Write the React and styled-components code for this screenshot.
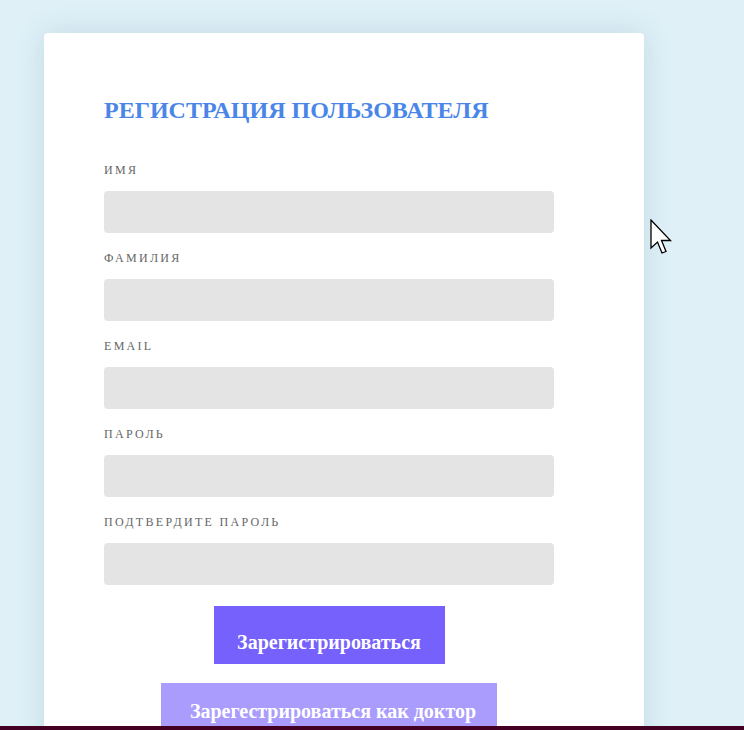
import styled, { createGlobalStyle } from "styled-components";

const GlobalStyle = createGlobalStyle`
  body {
    margin: 0;
    background: #dff0f7;
    font-family: "Liberation Serif", "Times New Roman", serif;
  }
`;

const Page = styled.div`
  min-height: 730px;
  padding: 33px 0 0 44px;
  box-sizing: border-box;
`;

const Card = styled.div`
  width: 600px;
  min-height: 720px;
  box-sizing: border-box;
  padding: 63px 60px 40px;
  background-color: #fff;
  border-radius: 4px;
  box-shadow: 0 0 28px rgba(60, 120, 150, 0.18);
`;

const Title = styled.h2`
  margin: 0 0 38px;
  font-size: 24px;
  line-height: 28px;
  font-weight: bold;
  color: #4a86e8;
`;

const Form = styled.form`
  width: 450px;
  display: flex;
  flex-direction: column;
`;

const Field = styled.div`
  display: flex;
  flex-direction: column;
  margin-bottom: 17px;
`;

const Label = styled.label`
  font-size: 12px;
  line-height: 16px;
  letter-spacing: 2.3px;
  color: #666;
  margin-bottom: 13px;
`;

const Input = styled.input`
  height: 42px;
  border: none;
  border-radius: 4px;
  background-color: #e4e4e4;
  outline: none;
  padding: 0 12px;
`;

const Button = styled.button`
  align-self: center;
  border: none;
  padding: ${(p) => (p.$light ? "13px 16px 14px 24px" : "21px 20px 6px")};
  width: ${(p) => p.$width}px;
  background-color: ${(p) => (p.$light ? "#aa9cfd" : "#7661fd")};
  color: #fff;
  font-family: "Liberation Serif", "Times New Roman", serif;
  font-weight: bold;
  font-size: 20px;
  line-height: 31px;
  margin-top: ${(p) => p.$top}px;
  cursor: pointer;
`;

const BottomBar = styled.div`
  position: fixed;
  left: 0;
  right: 0;
  bottom: 0;
  height: 4px;
  background-color: #430022;
`;

const Pointer = styled.svg`
  position: fixed;
  left: 650px;
  top: 219px;
`;

const fields = ["ИМЯ", "ФАМИЛИЯ", "EMAIL", "ПАРОЛЬ", "ПОДТВЕРДИТЕ ПАРОЛЬ"];

export default function App() {
  return (
    <>
      <GlobalStyle />
      <Page>
        <Card>
          <Title>РЕГИСТРАЦИЯ ПОЛЬЗОВАТЕЛЯ</Title>
          <Form onSubmit={(e) => e.preventDefault()}>
            {fields.map((f) => (
              <Field key={f}>
                <Label>{f}</Label>
                <Input type={f.includes("ПАРОЛЬ") ? "password" : "text"} />
              </Field>
            ))}
            <Button $width={231} $top={4}>Зарегистрироваться</Button>
            <Button $width={336} $top={19} $light>
              Зарегестрироваться как доктор
            </Button>
          </Form>
        </Card>
      </Page>
      <Pointer width="24" height="38" viewBox="0 0 24 38">
        <path
          d="M1 1 L1 29 L7.5 23 L12 34 L16 32.5 L11.5 21.5 L20.5 21.5 Z"
          fill="#fff"
          stroke="#000"
          strokeWidth="1.3"
          strokeLinejoin="miter"
        />
      </Pointer>
      <BottomBar />
    </>
  );
}
